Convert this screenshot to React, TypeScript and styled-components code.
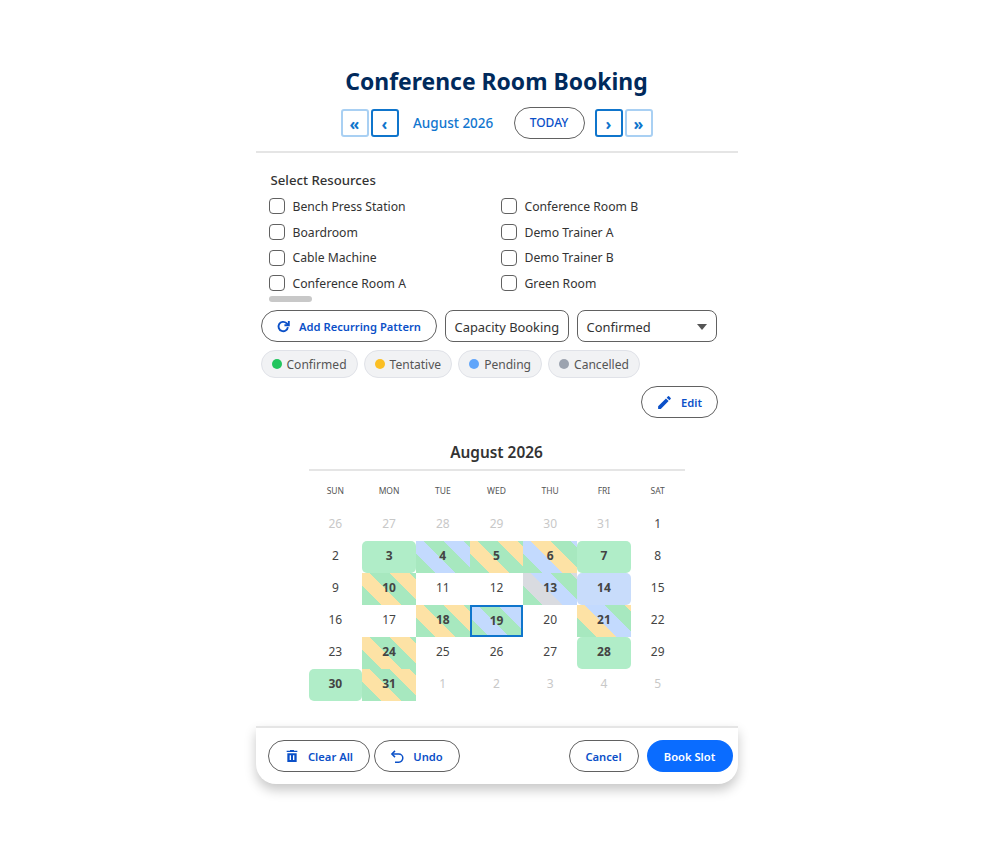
import React from 'react';
import styled, { createGlobalStyle } from 'styled-components';

const font = `"Noto Sans", "Open Sans", sans-serif`;
const G = '#a7e8bf', B = '#c3dafe', Y = '#fde2a5', X = '#d9dbe0';

const Global = createGlobalStyle`
  html, body { margin: 0; padding: 0; background: #fff; }
  body { font-family: ${font}; }
  * { box-sizing: border-box; }
`;
const Page = styled.div`
  width: 993px; height: 863px; padding-top: 64px; display: flex; flex-direction: column; align-items: center;
`;
const Panel = styled.div`
  width: 482px; display: flex; flex-direction: column;
`;
const Title = styled.h1`
  margin: 0; height: 36px; text-align: center; font-size: 22.9px; line-height: 36px; font-weight: 700; color: #002a5c;
`;
const NavRow = styled.div`
  height: 45px; display: flex; align-items: center; justify-content: center;
`;
const Rule = styled.div`
  height: 2px; background: #e5e5e5; margin-top: 6px;
`;
const NavBtn = styled.button<{ $dim?: boolean }>`
  width: 28px; height: 28px; padding: 3px 0 0; margin: 0 1px; background: #fff; border-radius: 3px;
  border: 2px solid ${p => (p.$dim ? '#a9d0f3' : '#0f75cc')};
  color: #0f75cc; font-family: ${font}; font-size: 16px; line-height: 1; font-weight: 700;
`;
const MonthLabel = styled.span`
  width: 114px; padding-left: 13.5px; font-size: 13.5px; font-weight: 500; color: #1176cf;
`;
const TodayBtn = styled.button`
  width: 71px; height: 32px; margin: 0 9px 0 0; padding: 0; background: #fff; border: 1px solid #616161; border-radius: 16px;
  font-family: ${font}; font-size: 12px; font-weight: 500; color: #0b50c8;
`;
const Resources = styled.section`
  padding: 18px 0 0 13px; height: 157px; display: flex; flex-direction: column;
`;
const Label = styled.div`
  font-size: 13.2px; line-height: 18px; font-weight: 500; color: #333; padding-left: 2px;
`;
const CheckGrid = styled.div`
  display: grid; grid-template-columns: 232px 200px; margin-top: 4px;
`;
const CheckRow = styled.label<{ $h: number }>`
  height: ${p => p.$h}px; display: flex; align-items: center; font-size: 12.2px; color: #333;
`;
const Box = styled.span`
  width: 16px; height: 16px; border: 1.5px solid #616161; border-radius: 4px; margin-right: 8px; background: #fff;
`;
const Scrollbar = styled.div`
  width: 43px; height: 6px; border-radius: 3px; background: #c8c8c8;
`;
const Toolbar = styled.div`
  display: flex; gap: 8px; padding-left: 5px;
`;
const PillBtn = styled.button<{ $w: number }>`
  width: ${p => p.$w}px; height: 32px; padding: 0; background: #fff; border: 1px solid #616161; border-radius: 16px;
  font-family: ${font}; font-size: 11.2px; font-weight: 600; color: #0b50c8;
  display: inline-flex; align-items: center; justify-content: center; gap: 8px;
`;
const SquareBtn = styled.div<{ $w: number }>`
  width: ${p => p.$w}px; height: 32px; padding: 1px 9px 0; background: #fff; border: 1px solid #616161; border-radius: 8px;
  font-size: 12.9px; white-space: nowrap; color: #333; display: flex; align-items: center; justify-content: space-between;
`;
const Caret = styled.span`
  width: 0; height: 0; border-left: 5.5px solid transparent; border-right: 5.5px solid transparent; border-top: 6.5px solid #555;
`;
const Legend = styled.div`
  display: flex; gap: 6px; padding-left: 5px; margin-top: 8px;
`;
const Chip = styled.div`
  height: 28px; padding: 0 10px; background: #f1f2f4; border: 1px solid #e0e2e8; border-radius: 14px;
  display: flex; align-items: center; gap: 5px; font-size: 12.05px; color: #555;
`;
const Dot = styled.span<{ $c: string }>`
  width: 10px; height: 10px; border-radius: 50%; background: ${p => p.$c};
`;
const EditRow = styled.div`
  display: flex; justify-content: flex-end; padding-right: 20px; margin-top: 8px;
`;
const Calendar = styled.section`
  width: 376px; align-self: center; margin-top: 18px;
`;
const CalTitle = styled.div`
  text-align: center; font-size: 15.4px; line-height: 34px; height: 35px; font-weight: 600; color: #333; border-bottom: 2px solid #e5e5e5;
`;
const WeekRow = styled.div`
  display: grid; grid-template-columns: repeat(7, 1fr); height: 38px; padding-bottom: 0; align-items: center; text-align: center;
  font-size: 8.5px; color: #555;
`;
const Days = styled.div`
  display: grid; grid-template-columns: repeat(7, 1fr); grid-auto-rows: 32px;
`;
const Day = styled.div<{ $muted?: boolean; $bold?: boolean; $radius?: boolean; $selected?: boolean }>`
  display: flex; align-items: center; justify-content: center; font-size: 12px; padding-bottom: 4px;
  color: ${p => (p.$muted ? '#c8c8c8' : '#444')};
  font-weight: ${p => (p.$bold ? 700 : 400)};
  border-radius: ${p => (p.$radius ? '5px' : '0')};
  ${p => p.$selected ? 'border: 2px solid #0f75cc; padding-bottom: 1px; background-origin: border-box;' : ''}
`;
const Footer = styled.footer`
  height: 58px; border-top: 2px solid #e5e5e5; border-radius: 0 0 20px 20px; margin-top: 25px;
  box-shadow: 0 6px 12px rgba(0,0,0,.22);
  display: flex; align-items: center; justify-content: space-between; padding: 0 5px 0 12px; background: #fff;
`;
const Group = styled.div<{ $gap: number }>`
  display: flex; gap: ${p => p.$gap}px;
`;
const Primary = styled.button`
  width: 86px; height: 32px; padding: 0; border: 0; border-radius: 16px; background: #0a6cff; color: #fff;
  font-family: ${font}; font-size: 11.2px; font-weight: 600;
`;

const stripe = (...c: string[]) => {
  const w = 14;
  const stops = c.map((col, i) => `${col} ${i * w}px ${(i + 1) * w}px`).join(', ');
  return `repeating-linear-gradient(45deg, ${stops})`;
};

type D = { n: number; muted?: boolean; bg?: string; solid?: boolean; sel?: boolean };
const SG = '#b0edc8';
const days: D[] = [
  ...[26, 27, 28, 29, 30, 31].map(n => ({ n, muted: true })),
  { n: 1 }, { n: 2 },
  { n: 3, bg: SG, solid: true },
  { n: 4, bg: stripe(G, B) },
  { n: 5, bg: stripe(G, Y) },
  { n: 6, bg: stripe(G, B, Y) },
  { n: 7, bg: SG, solid: true },
  { n: 8 }, { n: 9 },
  { n: 10, bg: stripe(G, Y) },
  { n: 11 }, { n: 12 },
  { n: 13, bg: stripe(G, X, B) },
  { n: 14, bg: '#c8dcfb', solid: true },
  { n: 15 }, { n: 16 }, { n: 17 },
  { n: 18, bg: stripe(G, Y) },
  { n: 19, bg: stripe(G, B), sel: true },
  { n: 20 },
  { n: 21, bg: stripe(G, Y, B) },
  { n: 22 }, { n: 23 },
  { n: 24, bg: stripe(G, Y) },
  { n: 25 }, { n: 26 }, { n: 27 },
  { n: 28, bg: SG, solid: true },
  { n: 29 },
  { n: 30, bg: SG, solid: true },
  { n: 31, bg: stripe(G, Y) },
  ...[1, 2, 3, 4, 5].map(n => ({ n, muted: true })),
];

const Redo = () => (
  <svg width="15" height="15" viewBox="0 0 24 24" fill="none" stroke="currentColor" strokeWidth="3">
    <path d="M19 13a7.5 7.5 0 1 1-2.3-6.4L20 9.5" /><path d="M20.5 3v7H13.5" />
  </svg>
);
const Pencil = () => (
  <svg width="17" height="17" viewBox="0 0 24 24" fill="currentColor">
    <path d="M3 17.25V21h3.75L17.81 9.94l-3.75-3.75L3 17.25zM20.71 7.04a1 1 0 0 0 0-1.41l-2.34-2.34a1 1 0 0 0-1.41 0l-1.83 1.83 3.75 3.75 1.83-1.83z" />
  </svg>
);
const Trash = () => (
  <svg width="16" height="16" viewBox="0 0 24 24" fill="currentColor">
    <path d="M15 4V3H9v1H4v2h16V4h-5zM5 8v13h14V8H5zm5.5 10h-2v-7h2v7zm5 0h-2v-7h2v7z" />
  </svg>
);
const UndoIcon = () => (
  <svg width="15" height="15" viewBox="0 0 24 24" fill="none" stroke="currentColor" strokeWidth="2.4">
    <path d="M8 3 3 8l5 5" /><path d="M3.5 8h10.5a6.5 6.5 0 0 1 0 13H8" />
  </svg>
);

const rows = [['Bench Press Station', 'Conference Room B', 26], ['Boardroom', 'Demo Trainer A', 26], ['Cable Machine', 'Demo Trainer B', 25], ['Conference Room A', 'Green Room', 26]] as const;

export default function App() {
  return (
    <Page>
      <Global />
      <Panel>
        <Title>Conference Room Booking</Title>
        <NavRow>
          <NavBtn $dim>«</NavBtn>
          <NavBtn>‹</NavBtn>
          <MonthLabel>August 2026</MonthLabel>
          <TodayBtn>TODAY</TodayBtn>
          <NavBtn>›</NavBtn>
          <NavBtn $dim>»</NavBtn>
        </NavRow>
        <Rule />
        <Resources>
          <Label>Select Resources</Label>
          <CheckGrid>
            {rows.flatMap(([a, b, h]) => [
              <CheckRow key={a} $h={h}><Box />{a}</CheckRow>,
              <CheckRow key={b} $h={h}><Box />{b}</CheckRow>,
            ])}
          </CheckGrid>
          <Scrollbar />
        </Resources>
        <Toolbar>
          <PillBtn $w={176}><Redo />Add Recurring Pattern</PillBtn>
          <SquareBtn $w={124}>Capacity Booking</SquareBtn>
          <SquareBtn $w={140}><span>Confirmed</span><Caret /></SquareBtn>
        </Toolbar>
        <Legend>
          <Chip><Dot $c="#22c55e" />Confirmed</Chip>
          <Chip><Dot $c="#fbbf24" />Tentative</Chip>
          <Chip><Dot $c="#60a5fa" />Pending</Chip>
          <Chip><Dot $c="#9ca3af" />Cancelled</Chip>
        </Legend>
        <EditRow><PillBtn $w={77}><Pencil />Edit</PillBtn></EditRow>
        <Calendar>
          <CalTitle>August 2026</CalTitle>
          <WeekRow>{['SUN', 'MON', 'TUE', 'WED', 'THU', 'FRI', 'SAT'].map(d => <span key={d}>{d}</span>)}</WeekRow>
          <Days>
            {days.map((d, i) => (
              <Day key={i} $muted={d.muted} $bold={!!d.bg} $radius={d.solid} $selected={d.sel}
                style={d.bg ? { background: d.bg, backgroundOrigin: 'border-box' } : undefined}>{d.n}</Day>
            ))}
          </Days>
        </Calendar>
        <Footer>
          <Group $gap={4}>
            <PillBtn $w={102}><Trash />Clear All</PillBtn>
            <PillBtn $w={86}><UndoIcon />Undo</PillBtn>
          </Group>
          <Group $gap={8}>
            <PillBtn $w={70}>Cancel</PillBtn>
            <Primary>Book Slot</Primary>
          </Group>
        </Footer>
      </Panel>
    </Page>
  );
}
